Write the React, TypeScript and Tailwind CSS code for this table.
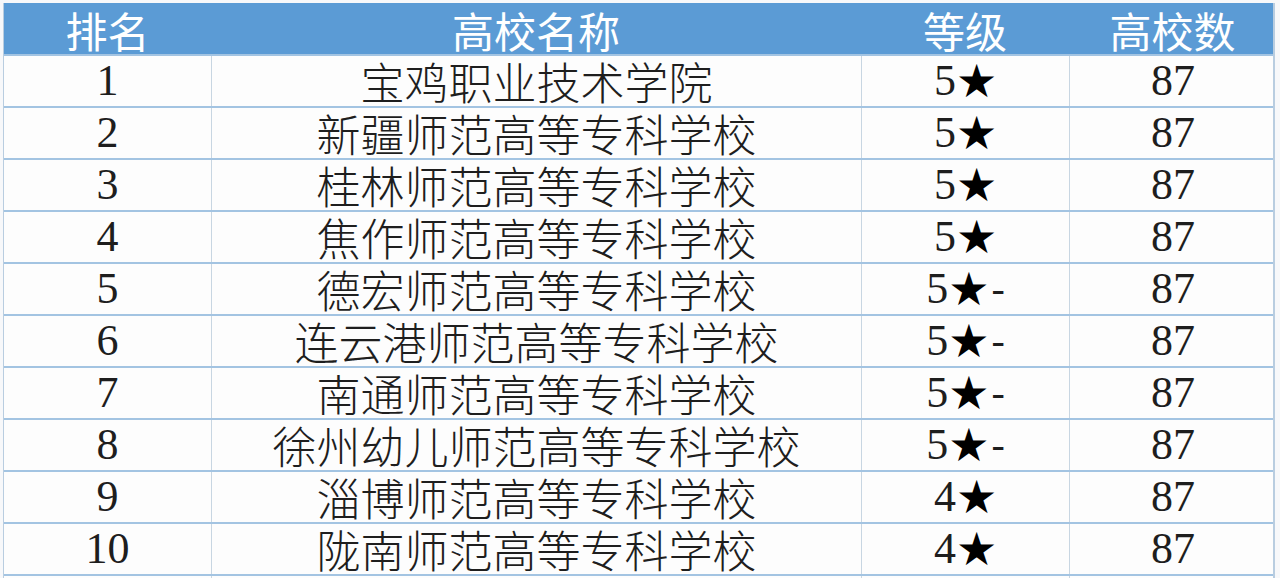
const rows = [
  { rank: 1, name: '宝鸡职业技术学院', level: '5★', count: 87 },
  { rank: 2, name: '新疆师范高等专科学校', level: '5★', count: 87 },
  { rank: 3, name: '桂林师范高等专科学校', level: '5★', count: 87 },
  { rank: 4, name: '焦作师范高等专科学校', level: '5★', count: 87 },
  { rank: 5, name: '德宏师范高等专科学校', level: '5★-', count: 87 },
  { rank: 6, name: '连云港师范高等专科学校', level: '5★-', count: 87 },
  { rank: 7, name: '南通师范高等专科学校', level: '5★-', count: 87 },
  { rank: 8, name: '徐州幼儿师范高等专科学校', level: '5★-', count: 87 },
  { rank: 9, name: '淄博师范高等专科学校', level: '4★', count: 87 },
  { rank: 10, name: '陇南师范高等专科学校', level: '4★', count: 87 },
];

const cols = 'grid grid-cols-[207px_650px_208px_207px]';
const cell = 'flex items-center justify-center leading-none';

export default function App() {
  return (
    <div className="h-[578px] w-[1280px] overflow-hidden bg-[#f7f8fa] pl-[3px] pt-[3px]">
      <div className="w-[1272px] border-r-2 border-l border-[#b9cde0] bg-[#fdfdfd]">
        <div
          className={`${cols} h-[51px] bg-[#5b9bd5] font-['Noto_Sans_CJK_SC','Noto_Sans',sans-serif] text-[42px] text-white`}
        >
          <div className={`${cell} pt-[2px]`}>排名</div>
          <div className={`${cell} pt-[2px]`}>高校名称</div>
          <div className={`${cell} pt-[2px]`}>等级</div>
          <div className={`${cell} pt-[2px]`}>高校数</div>
        </div>
        {rows.map((row) => (
          <div
            key={row.rank}
            className={`${cols} h-[52px] border-t-2 border-[#a3c4e2] font-['Liberation_Serif',serif] text-[44px] text-[#1e1e1e]`}
          >
            <div className={cell}>{row.rank}</div>
            <div className={`${cell} border-l border-[#c8d6e2] font-['Noto_Sans_CJK_SC',sans-serif] font-light`}>
              {row.name}
            </div>
            <div className={`${cell} border-l border-[#c8d6e2]`}>
              <span>{row.level.startsWith('5') ? '5' : '4'}</span>
              <span className="font-['DejaVu_Sans',sans-serif] text-[46px] text-black">★</span>
              {row.level.endsWith('-') && <span className="ml-[2px] text-[40px]">-</span>}
            </div>
            <div className={`${cell} border-l border-[#c8d6e2]`}>{row.count}</div>
          </div>
        ))}
        <div className={`${cols} h-[4px] border-t-2 border-[#a3c4e2]`}>
          <div />
          <div className="border-l border-[#c8d6e2]" />
          <div className="border-l border-[#c8d6e2]" />
          <div className="border-l border-[#c8d6e2]" />
        </div>
      </div>
    </div>
  );
}
